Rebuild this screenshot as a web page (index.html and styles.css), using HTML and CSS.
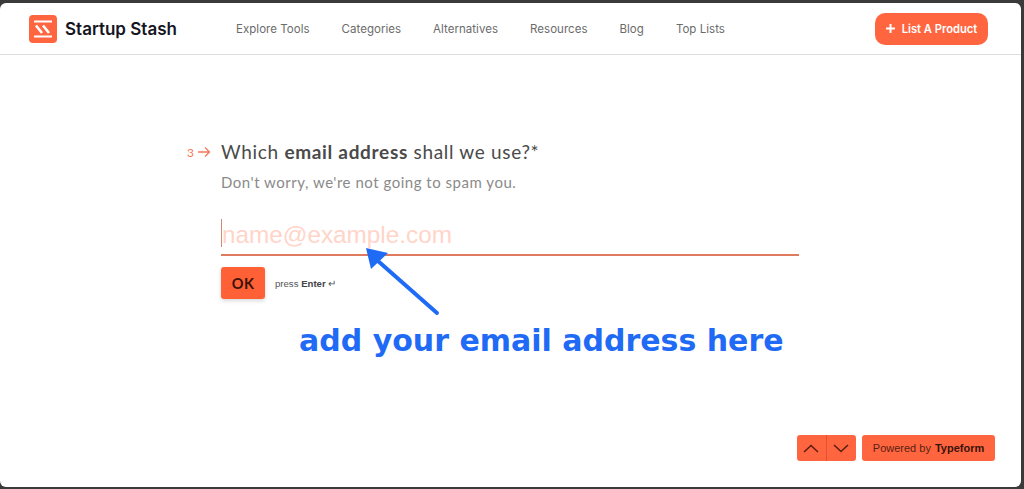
FILE: index.html
```html
<!DOCTYPE html>
<html lang="en">
<head>
  <meta charset="UTF-8" />
  <title>Startup Stash - List a product</title>
  <link rel="stylesheet" href="styles.css">
</head>
<body>
  <div class="frame">
    <!-- header -->
    <header class="topbar">
      <a class="brand" href="#">
        <svg class="brand-logo" width="28" height="28" viewBox="0 0 28 28">
          <rect width="28" height="28" rx="4" fill="#ff6640"/>
          <path d="M5 6.5H23M5 21.5H23" stroke="#fff" stroke-width="2" fill="none"/>
          <path d="M7 10.5L13 18M14 10.5L20 18" stroke="#fff" stroke-width="2.6" fill="none"/>
        </svg>
        <span>Startup Stash</span>
      </a>
      <nav class="nav">
        <a href="#">Explore Tools</a>
        <a href="#">Categories</a>
        <a href="#">Alternatives</a>
        <a href="#">Resources</a>
        <a href="#">Blog</a>
        <a href="#">Top Lists</a>
      </nav>
      <a class="list-btn" href="#">
        <svg width="9" height="9" viewBox="0 0 9 9"><path d="M4.5 0V9M0 4.5H9" stroke="#fff" stroke-width="2"/></svg>
        List A Product
      </a>
    </header>

    <!-- question -->
    <main class="form">
      <div class="question">
        <div class="step"><span>3</span>
          <svg width="14" height="12" viewBox="0 0 14 12"><path d="M1 6H12.5M8 1.5L12.5 6L8 10.5" stroke="#f47a5a" stroke-width="1.3" fill="none"/></svg>
        </div>
        <div class="answer">
          <h1>Which <b>email address</b> shall we use?*</h1>
          <p class="hint">Don't worry, we're not going to spam you.</p>
          <div class="field"><span class="caret"></span><span class="placeholder">name@example.com</span></div>
          <div class="actions">
            <button class="ok">OK</button>
            <span class="press">press <b>Enter</b> ↵</span>
          </div>
        </div>
      </div>
    </main>

    <!-- arrow and caption drawn over the form -->
    <svg class="pointer" width="90" height="80" viewBox="0 0 90 80">
      <path d="M73 69L14 17" stroke="#1f6bf5" stroke-width="4" stroke-linecap="round" fill="none"/>
      <path d="M2 4L24 9L7 25Z" fill="#1f6bf5"/>
    </svg>
    <div class="caption">add your email address here</div>

    <!-- typeform footer -->
    <footer class="tf-bar">
      <div class="tf-nav">
        <button><svg width="16" height="9" viewBox="0 0 16 9"><path d="M1 8L8 1.5L15 8" stroke="#5a1f10" stroke-width="1.6" fill="none"/></svg></button>
        <button><svg width="16" height="9" viewBox="0 0 16 9"><path d="M1 1L8 7.5L15 1" stroke="#5a1f10" stroke-width="1.6" fill="none"/></svg></button>
      </div>
      <a class="tf-brand" href="#">Powered by <b>Typeform</b></a>
    </footer>
  </div>
</body>
</html>
```

FILE: styles.css
```css
html, body {
  margin: 0;
  height: 100%;
  overflow: hidden;
}
body {
  background: #3a3a3a;
  padding: 3px 3px 2px 0;
  box-sizing: border-box;
  font-family: 'Lato', sans-serif;
}
.frame {
  position: relative;
  background: #fff;
  height: 100%;
  border-radius: 6px;
  display: flex;
  flex-direction: column;
}

/* === header === */
.topbar {
  height: 51px;
  border-bottom: 1px solid #dedede;
  display: flex;
  align-items: center;
  padding: 0 33px 0 29px;
  flex-shrink: 0;
}
.brand {
  display: flex;
  align-items: center;
  gap: 8px;
  color: #15151f;
  text-decoration: none;
  font-family: 'Inter', sans-serif;
  font-weight: 600;
  font-size: 17px;
  width: 207px;
}
.brand-logo {
  flex-shrink: 0;
}
.nav {
  display: flex;
  gap: 32px;
  flex: 1;
  padding-top: 1px;
}
.nav a {
  color: #6b6b6b;
  text-decoration: none;
  font-family: 'Inter', sans-serif;
  font-size: 11.5px;
  letter-spacing: 0.03px;
}
.list-btn {
  background: #ff6640;
  color: #fff;
  border-radius: 10px;
  height: 32px;
  width: 113px;
  display: flex;
  align-items: center;
  justify-content: center;
  gap: 7px;
  text-decoration: none;
  font-family: 'Inter', sans-serif;
  font-weight: 600;
  font-size: 11.2px;
}

/* === question === */
.form {
  flex: 1;
  padding: 86px 0 0 187px;
}
.question {
  display: flex;
}
.step {
  width: 34px;
  height: 22px;
  display: flex;
  align-items: center;
  gap: 3px;
  color: #f47a5a;
  font-size: 12px;
}
.answer {
  width: 578px;
}
h1 {
  margin: 0;
  font-size: 19px;
  line-height: 22px;
  font-weight: 400;
  color: #4a4a4a;
  letter-spacing: 0.68px;
}
h1 b {
  font-weight: 700;
}
.hint {
  margin: 9px 0 0;
  font-size: 15px;
  line-height: 20px;
  color: #8a8a8a;
  letter-spacing: 0.52px;
}
.field {
  margin-top: 19px;
  height: 43px;
  border-bottom: 2px solid #e07a5f;
  display: flex;
  align-items: center;
}
.caret {
  width: 1px;
  height: 28px;
  background: #d08a78;
}
.placeholder {
  color: #ffd5c9;
  font-family: 'Liberation Sans', sans-serif;
  font-size: 24.3px;
  padding-top: 4px;
}
.actions {
  margin-top: 11px;
  display: flex;
  align-items: center;
  gap: 10px;
}
.ok {
  width: 44px;
  height: 32px;
  border: none;
  border-radius: 3px;
  background: #ff6035;
  color: #3a1208;
  font-family: 'Lato', sans-serif;
  font-weight: 700;
  font-size: 14.5px;
  letter-spacing: 0.5px;
  box-shadow: 0 2px 4px rgba(0, 0, 0, 0.15);
}
.press {
  font-family: 'Liberation Sans', sans-serif;
  font-size: 9.6px;
  color: #555;
}
.press b {
  color: #444;
}

/* === annotation === */
.pointer {
  position: absolute;
  left: 364px;
  top: 241px;
}
.caption {
  position: absolute;
  left: 299px;
  top: 319px;
  color: #1f6bf5;
  font-family: 'DejaVu Sans', sans-serif;
  font-weight: 700;
  font-size: 30px;
  line-height: 38px;
  white-space: nowrap;
}

/* === typeform bar === */
.tf-bar {
  position: absolute;
  right: 26px;
  bottom: 26px;
  display: flex;
  gap: 6px;
}
.tf-nav {
  display: flex;
}
.tf-nav button {
  width: 29.5px;
  height: 26px;
  border: none;
  padding: 0;
  background: #ff6640;
  display: flex;
  align-items: center;
  justify-content: center;
}
.tf-nav button:first-child {
  border-right: 1px solid #e0532f;
  border-radius: 3px 0 0 3px;
}
.tf-nav button:last-child {
  border-radius: 0 3px 3px 0;
}
.tf-brand {
  width: 133px;
  height: 26px;
  background: #ff6640;
  border-radius: 3px;
  color: #5a1f10;
  display: flex;
  align-items: center;
  justify-content: center;
  gap: 4px;
  text-decoration: none;
  font-family: 'Liberation Sans', sans-serif;
  font-size: 11px;
}
.tf-brand b {
  color: #3a1208;
}
```
